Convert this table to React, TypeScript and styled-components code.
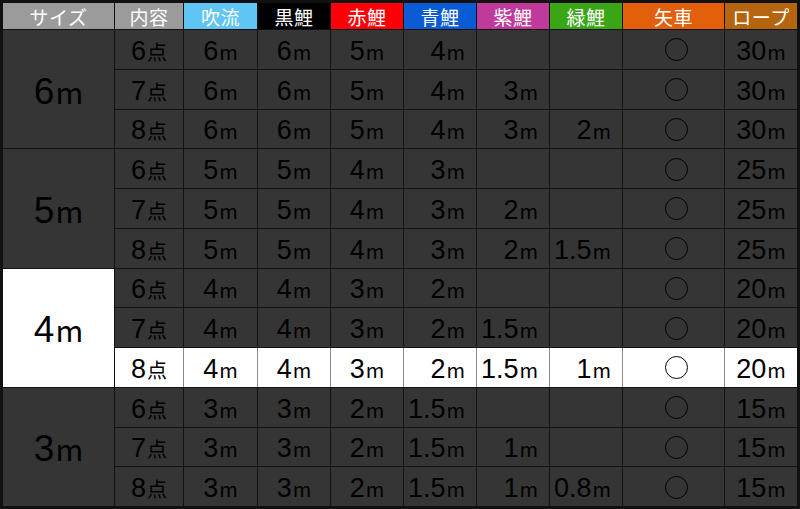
import styled, { createGlobalStyle } from "styled-components";

const GlobalStyle = createGlobalStyle`
  html, body {
    margin: 0;
    padding: 0;
    background: #0c0c0c;
  }
`;

type Align = "center" | "right";

type Column = {
  label: string;
  color: string;
  align: Align;
};

const columns: Column[] = [
  { label: "内容", color: "#9b9b9b", align: "center" },
  { label: "吹流", color: "#5ec5f4", align: "center" },
  { label: "黒鯉", color: "#000000", align: "center" },
  { label: "赤鯉", color: "#fb0006", align: "center" },
  { label: "青鯉", color: "#0b5bd5", align: "right" },
  { label: "紫鯉", color: "#c03a9c", align: "right" },
  { label: "緑鯉", color: "#3aa616", align: "right" },
  { label: "矢車", color: "#e2600c", align: "center" },
  { label: "ロープ", color: "#b5650f", align: "center" },
];

type Group = {
  size: string;
  highlight?: boolean;
  rows: string[][];
  rope: string;
};

const groups: Group[] = [
  {
    size: "6",
    rope: "30",
    rows: [
      ["6", "6", "6", "5", "4", "", ""],
      ["7", "6", "6", "5", "4", "3", ""],
      ["8", "6", "6", "5", "4", "3", "2"],
    ],
  },
  {
    size: "5",
    rope: "25",
    rows: [
      ["6", "5", "5", "4", "3", "", ""],
      ["7", "5", "5", "4", "3", "2", ""],
      ["8", "5", "5", "4", "3", "2", "1.5"],
    ],
  },
  {
    size: "4",
    rope: "20",
    highlight: true,
    rows: [
      ["6", "4", "4", "3", "2", "", ""],
      ["7", "4", "4", "3", "2", "1.5", ""],
      ["8", "4", "4", "3", "2", "1.5", "1"],
    ],
  },
  {
    size: "3",
    rope: "15",
    rows: [
      ["6", "3", "3", "2", "1.5", "", ""],
      ["7", "3", "3", "2", "1.5", "1", ""],
      ["8", "3", "3", "2", "1.5", "1", "0.8"],
    ],
  },
];

const Table = styled.div`
  box-sizing: border-box;
  width: 800px;
  height: 509px;
  padding: 3px;
  background: #111;
  display: grid;
  grid-template-columns: 111px 68px 73px 72px 72px 72px 72px 72px 101px 72px;
  grid-template-rows: 26px repeat(12, 1fr);
  gap: 1px;
  font-family: "Liberation Sans", Arial, sans-serif;
`;

const HeadCell = styled.div<{ $bg: string }>`
  background: ${(p) => p.$bg};
  color: #fff;
  display: flex;
  align-items: center;
  justify-content: center;
  font-family: "Noto Sans CJK JP", sans-serif;
  font-size: 19px;
  line-height: 1;
  letter-spacing: 0.5px;
  padding-top: 1px;
`;

const SizeCell = styled.div<{ $row: number; $light?: boolean }>`
  grid-column: 1;
  grid-row: ${(p) => p.$row} / span 3;
  background: ${(p) => (p.$light ? "#fff" : "#353535")};
  color: #000;
  display: flex;
  align-items: center;
  justify-content: center;
  padding-top: 4px;
`;

const Cell = styled.div<{ $align: Align; $light?: boolean; $joined?: boolean }>`
  background: ${(p) => (p.$light ? "#fff" : "#353535")};
  color: #000;
  display: flex;
  align-items: center;
  justify-content: ${(p) => (p.$align === "right" ? "flex-end" : "center")};
  padding: 4px ${(p) => (p.$align === "right" ? "11px" : "0")} 0 0;
  ${(p) => (p.$joined ? `margin-left: -1px; border-left: 1px solid #8c8c8c;` : "")}
`;

const Digits = styled.span<{ $big?: boolean }>`
  font-size: ${(p) => (p.$big ? "37px" : "27px")};
  line-height: 1;
`;

const Unit = styled.span<{ $big?: boolean }>`
  font-family: "Noto Sans CJK JP", sans-serif;
  font-size: ${(p) => (p.$big ? "30px" : "20px")};
  line-height: 1;
  margin-left: 1px;
`;

const Circle = styled.span`
  display: block;
  width: 21px;
  height: 21px;
  border: 1.6px solid #000;
  border-radius: 50%;
  margin: 0 0 3px 5px;
`;

function Value({ v, unit = "m", big }: { v: string; unit?: string; big?: boolean }) {
  if (!v) return null;
  return (
    <span>
      <Digits $big={big}>{v}</Digits>
      <Unit $big={big}>{unit}</Unit>
    </span>
  );
}

export default function App() {
  return (
    <>
      <GlobalStyle />
      <Table>
        <HeadCell $bg="#9b9b9b">サイズ</HeadCell>
        {columns.map((c) => (
          <HeadCell key={c.label} $bg={c.color}>
            {c.label}
          </HeadCell>
        ))}

        {groups.map((g, gi) => {
          const startRow = 2 + gi * 3;
          return [
            <SizeCell key={`s${gi}`} $row={startRow} $light={g.highlight}>
              <Value v={g.size} big />
            </SizeCell>,
            ...g.rows.map((r, ri) => {
              const light = g.highlight && ri === 2;
              return [
                <Cell key={`c${gi}-${ri}-0`} $align="center" $light={light}>
                  <Value v={r[0]} unit="点" />
                </Cell>,
                ...r.slice(1).map((v, ci) => (
                  <Cell
                    key={`c${gi}-${ri}-${ci + 1}`}
                    $align={columns[ci + 1].align}
                    $light={light}
                    $joined={light}
                  >
                    <Value v={v} />
                  </Cell>
                )),
                <Cell key={`c${gi}-${ri}-ya`} $align="center" $light={light} $joined={light}>
                  <Circle />
                </Cell>,
                <Cell key={`c${gi}-${ri}-ro`} $align="center" $light={light} $joined={light}>
                  <Value v={g.rope} />
                </Cell>,
              ];
            }),
          ];
        })}
      </Table>
    </>
  );
}
